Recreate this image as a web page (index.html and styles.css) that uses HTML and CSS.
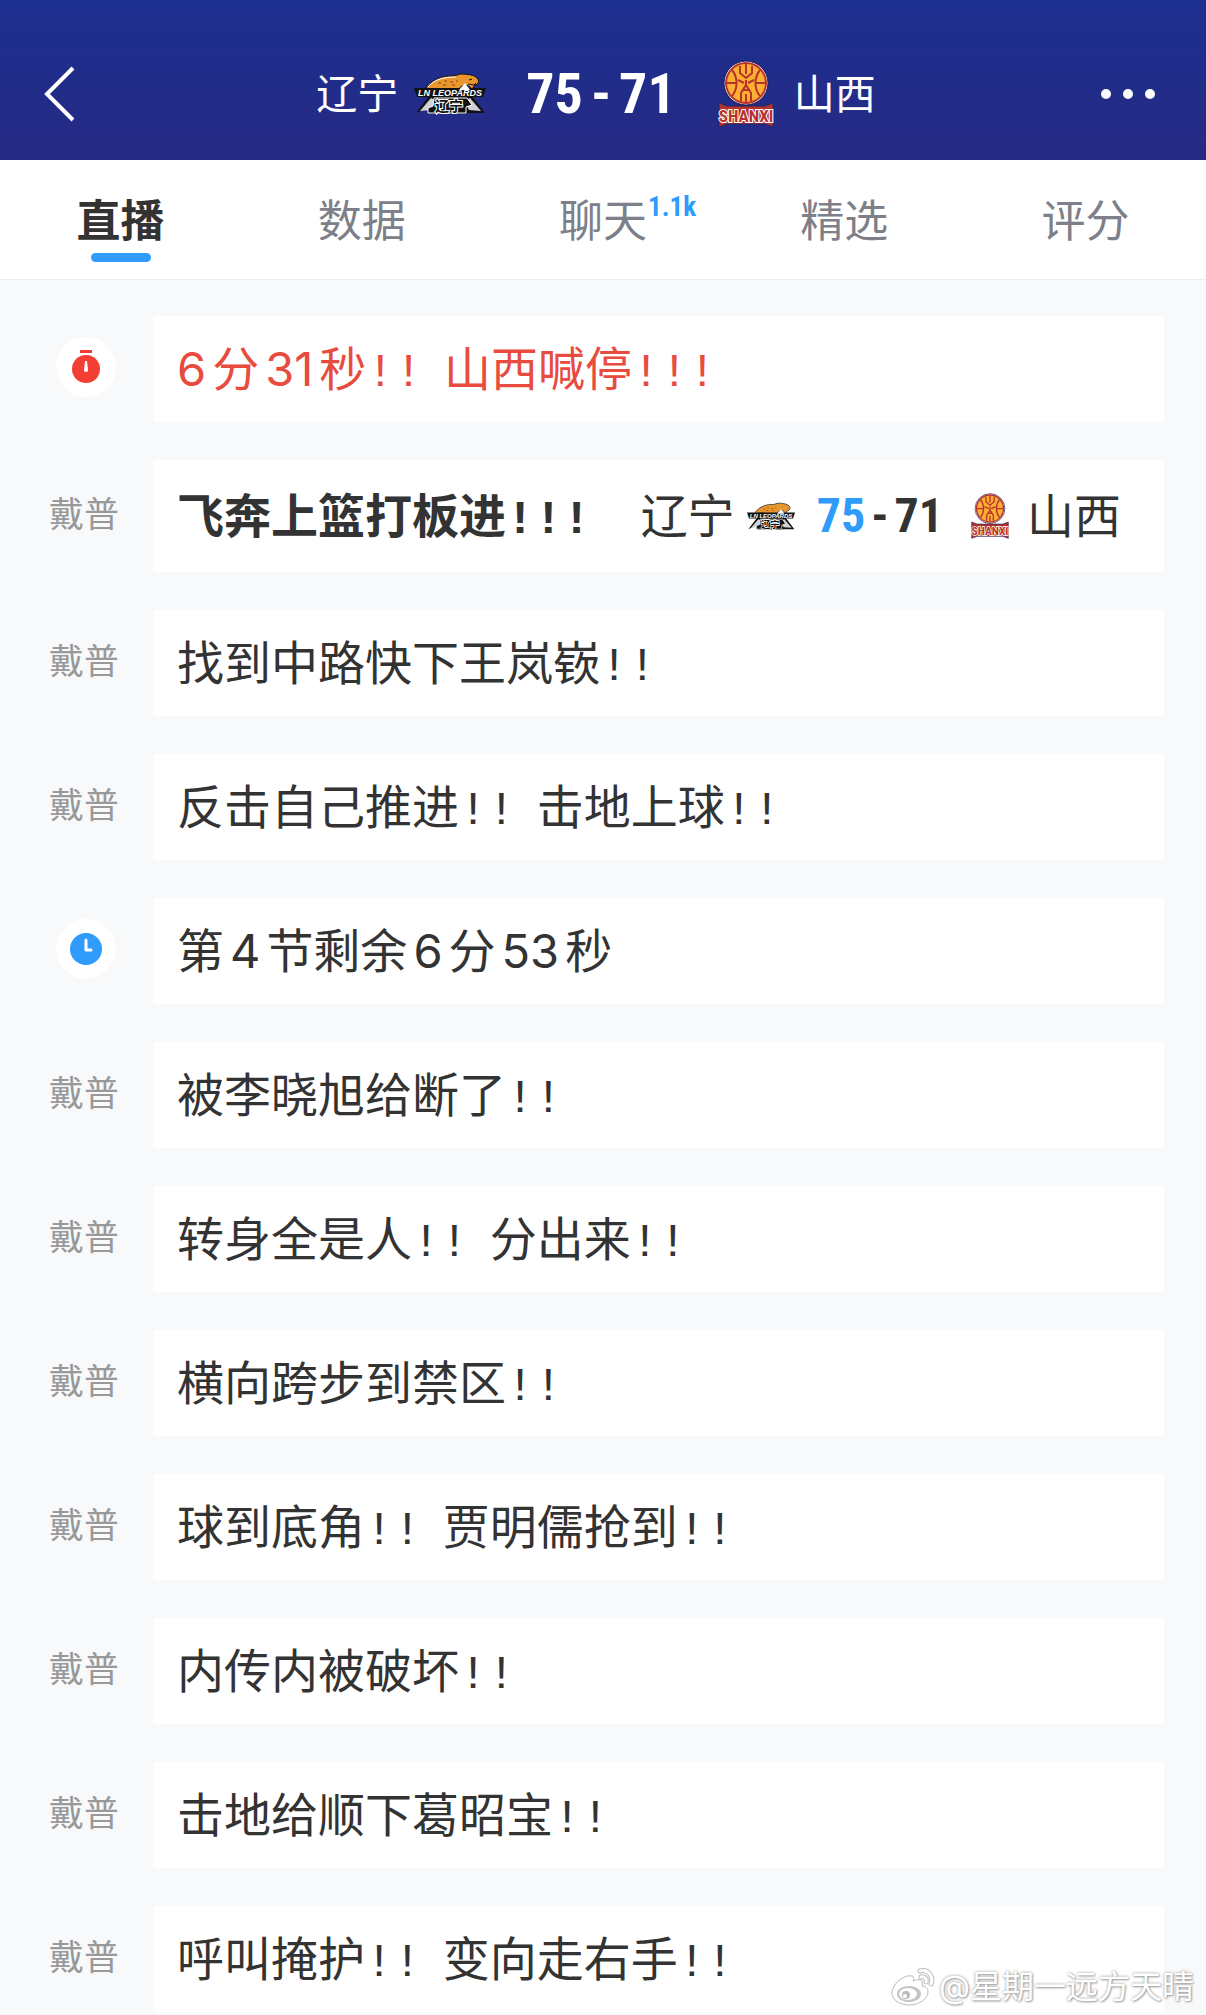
FILE: index.html
```html
<!DOCTYPE html>
<html lang="zh-CN">
<head>
  <meta charset="UTF-8" />
  <meta name="viewport" content="width=device-width, initial-scale=1.0" />
  <title>辽宁 75 - 71 山西</title>
  <link rel="stylesheet" href="styles.css">
</head>
<body>
  <header class="header">
    <button class="icon-button" aria-label="返回">
      <svg width="32" height="56" viewBox="0 0 32 56"><path d="M29 2 L3 28 L29 54" fill="none" stroke="#fff" stroke-width="4"/></svg>
    </button>
    <div class="match">
      <span>辽宁</span>
      <svg class="logo-leopards" viewBox="0 0 72 40" role="img" aria-label="辽宁队标">
        <path d="M14 33 L2 39 L15 22 H58 L71 39 H54 L50 40 H18 Z" fill="#111"/>
        <path d="M6 37 L17 24 L23 27 L18 36 Z M67 37 L56 24 L50 27 L55 36 Z" fill="#cfd2d6"/>
        <path d="M11 16 C16 6 29 1 40 2 L46 0 C54 0 60 1 63 4 C66 7 64 11 61 11 L58 15 L55 12 C50 10 46 12 43 18 L38 16 L32 17 C27 14 21 14 11 16 Z" fill="#e8962e" stroke="#111" stroke-width="1"/>
        <path d="M14 13 C20 5 31 3 42 3" fill="none" stroke="#fff" stroke-width="1"/>
        <path d="M24 9 h3 M30 7 h3 M36 8 h3 M29 11 h3 M42 7 h2 M38 11 h3" stroke="#8d4b12" stroke-width="1"/>
        <path d="M55 6 l3 -1 M54 10 l6 1 l2 -2" fill="none" stroke="#111" stroke-width="1"/>
        <path d="M0 14 H72 L69 23 H3 Z" fill="#111"/>
        <path d="M45 16 L51 9 L56 16 Z" fill="#fff"/>
        <text x="36" y="22" text-anchor="middle" class="leopards-name">LN LEOPARDS</text>
        <path d="M20 24 H53 L58 31 L52 33 V39 H14 V34 L19 32 Z" fill="#111" stroke="#fff" stroke-width="1"/>
        <text x="35" y="37" text-anchor="middle" class="leopards-city">辽宁</text>
      </svg>
      <strong class="score"><span>75</span><span>-</span><span>71</span></strong>
      <svg class="logo-shanxi" viewBox="0 0 56 68" role="img" aria-label="山西队标">
        <circle cx="28" cy="23" r="22" fill="#fff" stroke="#1b1b4c" stroke-width="1"/>
        <circle cx="28" cy="23" r="21" fill="#b8322c"/>
        <circle cx="28" cy="23" r="19" fill="#fbb034"/>
        <path d="M9 23 H19 M37 23 H47 M14 10 C20 17 20 29 14 36 M42 10 C36 17 36 29 42 36 M28 4 V14 M22 6 V13 L28 18 L34 13 V6 M20 20 L26 23 M36 20 L30 23 M28 20 V27 M23 41 V33 L28 25 L33 33 V41 M25 30 H31 M28 34 V42" fill="none" stroke="#b8322c" stroke-width="2"/>
        <path d="M1 43 L9 46 H47 L55 43 V67 L47 64 H9 L1 67 Z" fill="#b8322c" stroke="#26255f" stroke-width="1"/>
        <text x="28" y="62" text-anchor="middle" class="shanxi-name">SHANXI</text>
      </svg>
      <span>山西</span>
    </div>
    <button class="icon-button" aria-label="更多">
      <svg width="56" height="12" viewBox="0 0 56 12" fill="#fff"><circle cx="6" cy="6" r="5"/><circle cx="28" cy="6" r="5"/><circle cx="50" cy="6" r="5"/></svg>
    </button>
  </header>

  <nav class="tabs">
    <a class="tab active" href="#live">直播</a>
    <a class="tab" href="#stats">数据</a>
    <a class="tab" href="#chat">聊天<sup class="count">1.1k</sup></a>
    <a class="tab" href="#best">精选</a>
    <a class="tab" href="#rating">评分</a>
  </nav>

  <ul class="feed" id="live">
    <li class="row">
      <div class="who">
        <span class="badge">
          <svg width="28" height="34" viewBox="0 0 28 34"><path d="M8 0 H20 V3 H8 Z" fill="#f33f33"/><circle cx="14" cy="19" r="14" fill="#f33f33"/><path d="M13 11 h2 l1 9 a2 2 0 1 1 -4 0 Z" fill="#fff"/></svg>
        </span>
      </div>
      <p class="card timeout"><span class="num">6</span>分<span class="num">31</span>秒<span class="bang">!!</span> 山西喊停<span class="bang">!!!</span></p>
    </li>
    <li class="row">
      <div class="who">戴普</div>
      <div class="card goal">
        <b>飞奔上篮打板进<span class="bang">!!!</span></b>
        <div class="match small">
          <span>辽宁</span>
          <svg class="logo-leopards" viewBox="0 0 72 40" role="img" aria-label="辽宁队标">
            <path d="M14 33 L2 39 L15 22 H58 L71 39 H54 L50 40 H18 Z" fill="#111"/>
            <path d="M6 37 L17 24 L23 27 L18 36 Z M67 37 L56 24 L50 27 L55 36 Z" fill="#cfd2d6"/>
            <path d="M11 16 C16 6 29 1 40 2 L46 0 C54 0 60 1 63 4 C66 7 64 11 61 11 L58 15 L55 12 C50 10 46 12 43 18 L38 16 L32 17 C27 14 21 14 11 16 Z" fill="#e8962e" stroke="#111" stroke-width="1"/>
            <path d="M24 9 h3 M30 7 h3 M36 8 h3 M29 11 h3 M42 7 h2 M38 11 h3" stroke="#8d4b12" stroke-width="1"/>
            <path d="M0 14 H72 L69 23 H3 Z" fill="#111"/>
            <path d="M45 16 L51 9 L56 16 Z" fill="#fff"/>
            <text x="36" y="22" text-anchor="middle" class="leopards-name">LN LEOPARDS</text>
            <path d="M20 24 H53 L58 31 L52 33 V39 H14 V34 L19 32 Z" fill="#111" stroke="#fff" stroke-width="1"/>
            <text x="35" y="37" text-anchor="middle" class="leopards-city">辽宁</text>
          </svg>
          <strong class="score"><span class="lead">75</span><span>-</span><span>71</span></strong>
          <svg class="logo-shanxi" viewBox="0 0 56 68" role="img" aria-label="山西队标">
            <circle cx="28" cy="23" r="22" fill="#fff" stroke="#1b1b4c" stroke-width="1"/>
            <circle cx="28" cy="23" r="21" fill="#b8322c"/>
            <circle cx="28" cy="23" r="19" fill="#fbb034"/>
            <path d="M9 23 H19 M37 23 H47 M14 10 C20 17 20 29 14 36 M42 10 C36 17 36 29 42 36 M28 4 V14 M22 6 V13 L28 18 L34 13 V6 M20 20 L26 23 M36 20 L30 23 M28 20 V27 M23 41 V33 L28 25 L33 33 V41 M25 30 H31 M28 34 V42" fill="none" stroke="#b8322c" stroke-width="2"/>
            <path d="M1 43 L9 46 H47 L55 43 V67 L47 64 H9 L1 67 Z" fill="#b8322c" stroke="#26255f" stroke-width="1"/>
            <text x="28" y="62" text-anchor="middle" class="shanxi-name">SHANXI</text>
          </svg>
          <span>山西</span>
        </div>
      </div>
    </li>
    <li class="row">
      <div class="who">戴普</div>
      <p class="card">找到中路快下王岚嵚<span class="bang">!!</span></p>
    </li>
    <li class="row">
      <div class="who">戴普</div>
      <p class="card">反击自己推进<span class="bang">!!</span> 击地上球<span class="bang">!!</span></p>
    </li>
    <li class="row">
      <div class="who">
        <span class="badge">
          <svg width="32" height="32" viewBox="0 0 32 32"><circle cx="16" cy="16" r="16" fill="#2f9bfa"/><path d="M16 7 V17 H21" fill="none" stroke="#fff" stroke-width="3" stroke-linecap="round" stroke-linejoin="round"/></svg>
        </span>
      </div>
      <p class="card">第<span class="num">4</span>节剩余<span class="num">6</span>分<span class="num">53</span>秒</p>
    </li>
    <li class="row">
      <div class="who">戴普</div>
      <p class="card">被李晓旭给断了<span class="bang">!!</span></p>
    </li>
    <li class="row">
      <div class="who">戴普</div>
      <p class="card">转身全是人<span class="bang">!!</span> 分出来<span class="bang">!!</span></p>
    </li>
    <li class="row">
      <div class="who">戴普</div>
      <p class="card">横向跨步到禁区<span class="bang">!!</span></p>
    </li>
    <li class="row">
      <div class="who">戴普</div>
      <p class="card">球到底角<span class="bang">!!</span> 贾明儒抢到<span class="bang">!!</span></p>
    </li>
    <li class="row">
      <div class="who">戴普</div>
      <p class="card">内传内被破坏<span class="bang">!!</span></p>
    </li>
    <li class="row">
      <div class="who">戴普</div>
      <p class="card">击地给顺下葛昭宝<span class="bang">!!</span></p>
    </li>
    <li class="row">
      <div class="who">戴普</div>
      <p class="card">呼叫掩护<span class="bang">!!</span> 变向走右手<span class="bang">!!</span></p>
    </li>
  </ul>

  <!-- 水印 -->
  <div class="watermark">
    <svg width="44" height="38" viewBox="0 0 44 38">
      <path d="M21 8 C13 6 1 16 1 25 C1 32 9 37 18 37 C29 37 37 30 37 24 C37 20 34 18 31 18 C33 12 29 10 22 13 C23 10 23 8 21 8 Z" fill="#fff" stroke="#bbb" stroke-width="1"/>
      <ellipse cx="18" cy="26" rx="12" ry="8" fill="#c4c4c4"/>
      <ellipse cx="17" cy="26" rx="9" ry="6" fill="#fff"/>
      <circle cx="15" cy="27" r="4" fill="#bbb"/>
      <circle cx="14" cy="28" r="2" fill="#fff"/>
      <path d="M29 3 C37 1 43 8 40 16 M30 9 C34 8 36 11 35 14" fill="none" stroke="#bbb" stroke-width="5" stroke-linecap="round"/>
      <path d="M29 3 C37 1 43 8 40 16 M30 9 C34 8 36 11 35 14" fill="none" stroke="#fff" stroke-width="3" stroke-linecap="round"/>
    </svg>
    <span>@星期一远方天晴</span>
  </div>
</body>
</html>
```
FILE: styles.css
```css
* { box-sizing: border-box; }
body {
  margin: 0;
  position: relative;
  min-height: 100vh;
  background: #f8f9fb;
  color: #333;
  font-family: Inter, "Noto Sans CJK SC", sans-serif;
}

/* 顶部比分栏 */
.header {
  display: flex;
  align-items: center;
  height: 160px;
  padding: 28px 50px 0 44px;
  background: linear-gradient(#1c2f8f, #262a84);
  color: #fff;
}
.icon-button {
  display: flex;
  padding: 0;
  border: none;
  background: none;
  cursor: pointer;
}
.match {
  display: flex;
  align-items: center;
  font-size: 41px;
  line-height: 60px;
  white-space: nowrap;
}
.header .match {
  flex: 1;
  justify-content: center;
  padding-left: 16px;
}
.score {
  display: flex;
  gap: 8px;
  margin: 0 42px 0 40px;
  font-family: "Roboto Condensed", Roboto, sans-serif;
  font-size: 56px;
  font-weight: bold;
}
.lead { color: #2f9bfa; }
.logo-leopards { width: 72px; height: 40px; margin-left: 16px; overflow: visible; }
.logo-shanxi { width: 56px; height: 68px; margin-right: 20px; overflow: visible; }
.leopards-name { font: italic bold 9px "Liberation Sans", sans-serif; fill: #fff; }
.leopards-city {
  font: bold 14px "Noto Sans CJK SC", sans-serif;
  fill: #111;
  stroke: #fff;
  stroke-width: 2px;
  paint-order: stroke;
}
.shanxi-name {
  font: bold 17px "Roboto Condensed", Roboto, sans-serif;
  fill: #b8322c;
  stroke: #fff;
  stroke-width: 2px;
  paint-order: stroke;
}

/* 标签栏 */
.tabs {
  display: flex;
  height: 120px;
  background: #fff;
  border-bottom: 1px solid #eee;
}
.tab {
  position: relative;
  flex: 1;
  text-align: center;
  font-size: 44px;
  line-height: 122px;
  color: #7d8088;
  text-decoration: none;
}
.tab.active { color: #333; font-weight: bold; }
.tab.active::after {
  content: "";
  position: absolute;
  left: 50%;
  bottom: 17px;
  width: 60px;
  height: 9px;
  margin-left: -30px;
  border-radius: 5px;
  background: #2f9bfa;
}
.count {
  position: absolute;
  top: 30px;
  left: 50%;
  margin-left: 45px;
  font-family: "Roboto Condensed", Roboto, sans-serif;
  font-size: 27px;
  font-weight: bold;
  line-height: 34px;
  color: #2f9bfa;
}

/* 直播列表 */
.feed {
  display: flex;
  flex-direction: column;
  gap: 38px;
  margin: 0;
  padding: 36px 42px 3px 49px;
  list-style: none;
}
.row { display: flex; align-items: center; }
.who {
  flex: none;
  width: 104px;
  padding-bottom: 4px;
  font-size: 35px;
  line-height: 60px;
  color: #999;
}
.badge {
  display: flex;
  align-items: center;
  justify-content: center;
  width: 60px;
  height: 60px;
  margin-left: 7px;
  border-radius: 50%;
  background: #fff;
}
.card {
  flex: 1;
  margin: 0;
  padding: 18px 24px;
  border-radius: 4px;
  background: #fff;
  font-size: 47px;
  line-height: 70px;
}
.timeout { color: #e74c3f; }
.num { margin: 0 6px; }
.timeout .num:first-child { margin-left: 0; }
.bang {
  margin-right: 8px;
  font-family: "Liberation Mono", monospace;
  line-height: 50px;
}
.goal {
  display: flex;
  align-items: center;
  padding: 21px 24px;
  white-space: nowrap;
}
.small { margin-left: 42px; font-size: 47px; }
.small .logo-leopards { width: 48px; height: 27px; margin-left: 12px; }
.small .score { gap: 6px; margin: 0 28px 0 22px; font-size: 48px; }
.small .logo-shanxi { width: 38px; height: 46px; margin-right: 18px; }

.watermark {
  position: absolute;
  right: 12px;
  bottom: 8px;
  display: flex;
  align-items: center;
  gap: 4px;
  font-size: 32px;
  line-height: 40px;
  color: #fff;
  text-shadow: 0 0 3px #999, 1px 1px 2px #aaa;
}
```
